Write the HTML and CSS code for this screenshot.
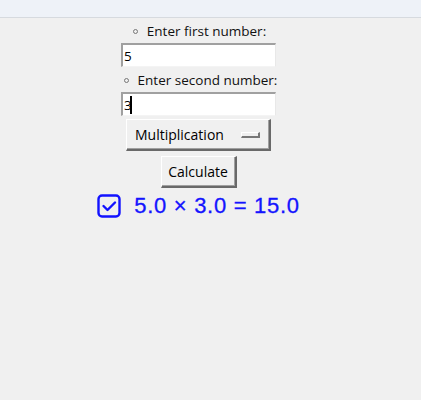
FILE: index.html
```html
<!DOCTYPE html>
<html>
<head>
<meta charset="utf-8">
<link rel="stylesheet" href="styles.css">
</head>
<body>
<div class="topbar"></div>
<div class="app">
  <div class="label label-first"><span class="bullet"></span><span>Enter first number:</span></div>
  <div class="entry"><span class="entry-text">5</span></div>
  <div class="label label-second"><span class="bullet"></span><span>Enter second number:</span></div>
  <div class="entry"><span class="entry-text">3</span><span class="caret"></span></div>
  <div class="optionmenu"><span class="om-text">Multiplication</span><span class="om-indicator"></span></div>
  <div class="button">Calculate</div>
  <div class="result">
    <svg class="check" width="24" height="24" viewBox="0 0 24 24">
      <rect x="1.5" y="1.5" width="21" height="21" rx="3.5" ry="3.5" fill="none" stroke="#1212ff" stroke-width="2.4"/>
      <path d="M6.5 12 L10.5 16 L18 8.5" fill="none" stroke="#1212ff" stroke-width="2.4" stroke-linecap="round" stroke-linejoin="round"/>
    </svg>
    <span class="result-text">5.0 × 3.0 = 15.0</span>
  </div>
</div>
</body>
</html>
```

FILE: styles.css
```css
html, body {
  margin: 0;
  padding: 0;
  background: #f0f0f0;
  font-family: "Open Sans", "Noto Sans", sans-serif;
  font-size: 13.5px;
  color: #000;
}
.topbar {
  height: 17px;
  background: #eef2f8;
  border-bottom: 1px solid #d6dadf;
}
.app {
  width: 397px;
  display: flex;
  flex-direction: column;
  align-items: center;
  padding-top: 4px;
}
.label {
  height: 18px;
  display: flex;
  align-items: center;
  gap: 9px;
  line-height: 18px;
  color: #111;
  font-size: 13.5px;
}
.label-first {
  margin-left: 2px;
}
.label-second {
  margin-top: 4px;
  margin-left: 4px;
}
.bullet {
  width: 5px;
  height: 5px;
  border: 1px solid #777;
  border-radius: 50%;
  box-sizing: border-box;
}
.entry {
  margin-top: 3px;
  width: 155px;
  height: 24px;
  box-sizing: border-box;
  background: #fff;
  border-style: solid;
  border-width: 2px 1px 1px 2px;
  border-color: #a0a0a0 #e8e8e8 #f4f4f4 #a0a0a0;
  display: flex;
  align-items: center;
  padding-left: 1px;
  font-size: 13.5px;
}
.entry-text {
  line-height: 16px;
}
.caret {
  width: 2px;
  height: 18px;
  background: #000;
  margin-left: -2px;
}
.optionmenu {
  margin-top: 3px;
  width: 145px;
  height: 32px;
  box-sizing: border-box;
  border-style: solid;
  border-width: 1px 2px 2px 1px;
  border-color: #fff #696969 #696969 #fff;
  box-shadow: inset -1px -1px 0 #a0a0a0;
  display: flex;
  align-items: center;
  justify-content: space-between;
  padding: 0 9px 0 8px;
  font-size: 14px;
}
.om-indicator {
  width: 19px;
  height: 6px;
  box-sizing: border-box;
  border-style: solid;
  border-width: 1px 2px 2px 1px;
  border-color: #fff #777 #777 #fff;
}
.button {
  margin-top: 5px;
  width: 76px;
  height: 32px;
  box-sizing: border-box;
  border-style: solid;
  border-width: 1px 2px 2px 1px;
  border-color: #fff #696969 #696969 #fff;
  box-shadow: inset -1px -1px 0 #a0a0a0;
  display: flex;
  align-items: center;
  justify-content: center;
  font-size: 14px;
}
.result {
  margin-top: 5px;
  display: flex;
  align-items: center;
  gap: 13px;
  height: 26px;
}
.check {
  display: block;
}
.result-text {
  font-family: "Liberation Sans", Arial, sans-serif;
  font-size: 22px;
  letter-spacing: 0.7px;
  color: #1414ff;
  -webkit-text-stroke: 0.3px #1414ff;
}
```
